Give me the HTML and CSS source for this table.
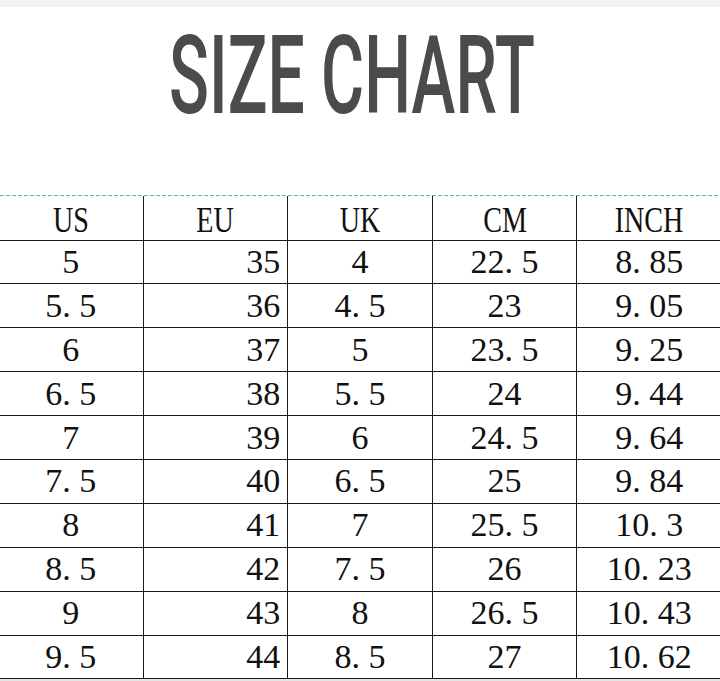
FILE: index.html
```html
<!DOCTYPE html>
<html lang="en">
<head>
<meta charset="utf-8">
<title>Size Chart</title>
<link rel="stylesheet" href="styles.css">
</head>
<body>
<div class="page">
  <div class="topbar"></div>
  <h1 class="title"><span class="title-text">SIZE CHART</span></h1>
  <div class="dash"></div>
  <div class="chart">
    <table class="sizes">
      <thead>
        <tr>
          <th><span class="hd">US</span></th>
          <th><span class="hd">EU</span></th>
          <th><span class="hd">UK</span></th>
          <th><span class="hd">CM</span></th>
          <th><span class="hd">INCH</span></th>
        </tr>
      </thead>
      <tbody>
        <tr><td>5</td><td class="eu">35</td><td>4</td><td>22<span class="pt">.</span>5</td><td>8<span class="pt">.</span>85</td></tr>
        <tr><td>5<span class="pt">.</span>5</td><td class="eu">36</td><td>4<span class="pt">.</span>5</td><td>23</td><td>9<span class="pt">.</span>05</td></tr>
        <tr><td>6</td><td class="eu">37</td><td>5</td><td>23<span class="pt">.</span>5</td><td>9<span class="pt">.</span>25</td></tr>
        <tr><td>6<span class="pt">.</span>5</td><td class="eu">38</td><td>5<span class="pt">.</span>5</td><td>24</td><td>9<span class="pt">.</span>44</td></tr>
        <tr><td>7</td><td class="eu">39</td><td>6</td><td>24<span class="pt">.</span>5</td><td>9<span class="pt">.</span>64</td></tr>
        <tr><td>7<span class="pt">.</span>5</td><td class="eu">40</td><td>6<span class="pt">.</span>5</td><td>25</td><td>9<span class="pt">.</span>84</td></tr>
        <tr><td>8</td><td class="eu">41</td><td>7</td><td>25<span class="pt">.</span>5</td><td>10<span class="pt">.</span>3</td></tr>
        <tr><td>8<span class="pt">.</span>5</td><td class="eu">42</td><td>7<span class="pt">.</span>5</td><td>26</td><td>10<span class="pt">.</span>23</td></tr>
        <tr><td>9</td><td class="eu">43</td><td>8</td><td>26<span class="pt">.</span>5</td><td>10<span class="pt">.</span>43</td></tr>
        <tr><td>9<span class="pt">.</span>5</td><td class="eu">44</td><td>8<span class="pt">.</span>5</td><td>27</td><td>10<span class="pt">.</span>62</td></tr>
      </tbody>
    </table>
  </div>
  <div class="bottombar"></div>
</div>
</body>
</html>
```

FILE: styles.css
```css
html, body {
  margin: 0;
  padding: 0;
  background: #ffffff;
  overflow: hidden;
}

.page {
  width: 720px;
  height: 681px;
  overflow: hidden;
  display: flex;
  flex-direction: column;
}

.topbar {
  height: 7px;
  background: #f3f3f3;
  flex: none;
}

.title {
  margin: 14px 0 0 0;
  height: 110px;
  display: flex;
  justify-content: center;
  font-family: Roboto, "Liberation Sans", sans-serif;
  font-weight: 500;
  font-size: 110px;
  line-height: 110px;
  color: #4b4b4b;
  flex: none;
}

.title-text {
  display: inline-block;
  transform: scaleX(0.6);
  transform-origin: center;
  margin-right: 17px;
  white-space: nowrap;
}

.dash {
  margin-top: 64px;
  height: 1px;
  flex: none;
  background: repeating-linear-gradient(to right, #4fc2a0 0 4px, transparent 4px 6px);
}

.chart {
  flex: none;
  width: 720px;
  overflow: hidden;
}

.sizes {
  table-layout: fixed;
  width: 724px;
  margin-left: -2px;
  border-collapse: collapse;
  font-family: "Liberation Serif", "Times New Roman", serif;
  font-size: 34px;
  line-height: 1;
  color: #111111;
}

.sizes th,
.sizes td {
  border: 1px solid #1a1a1a;
  padding: 0;
  text-align: center;
  vertical-align: middle;
  font-weight: 400;
}

.sizes thead tr {
  height: 44px;
}

.sizes thead th {
  border-top: none;
  padding-top: 4px;
}

.sizes tbody tr {
  height: 43.9px;
}

.sizes td.eu {
  text-align: right;
  padding-right: 7px;
}

.hd {
  display: inline-block;
  font-size: 36px;
  transform: scaleX(0.78);
}

.pt {
  margin-right: 0.25em;
}

.bottombar {
  flex: 1;
  background: #e4e4e4;
}
```
